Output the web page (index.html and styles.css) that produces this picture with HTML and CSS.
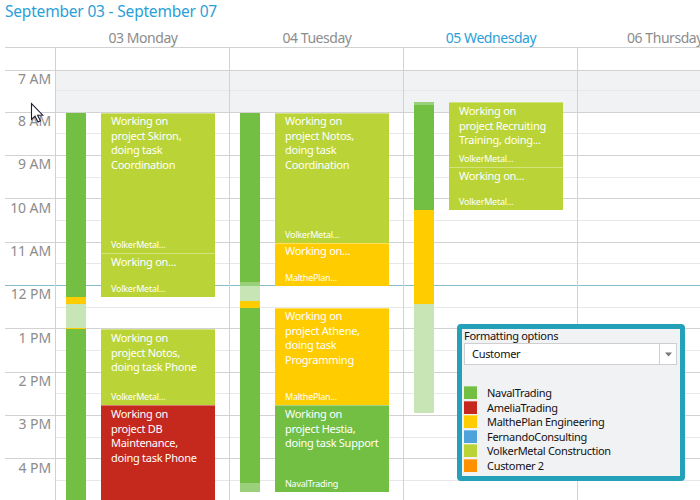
FILE: index.html
```html
<!DOCTYPE html>
<html lang="en">
<head>
<meta charset="utf-8">
<title>Schedule</title>
<link rel="stylesheet" href="styles.css">
</head>
<body>
<h1 class="range">September 03 - September 07</h1>
<header class="days">
  <div class="day-name">03 Monday</div>
  <div class="day-name">04 Tuesday</div>
  <div class="day-name today">05 Wednesday</div>
  <div class="day-name">06 Thursday</div>
</header>
<main class="calendar">
  <div class="rows">
    <div class="all-day"></div>
    <div class="hour h42 off"><span class="label">7 AM</span><div class="slots"><i class="half a20"></i></div></div>
    <div class="hour h43"><span class="label">8 AM</span><div class="slots"><i class="half a21"></i></div></div>
    <div class="hour h43"><span class="label">9 AM</span><div class="slots"><i class="half a22"></i></div></div>
    <div class="hour h44"><span class="label low">10 AM</span><div class="slots"><i class="half a22"></i></div></div>
    <div class="hour h43"><span class="label">11 AM</span><div class="slots"><i class="half a21"></i></div></div>
    <div class="hour h43 noon"><span class="label">12 PM</span><div class="slots"><i class="half a22"></i></div></div>
    <div class="hour h44"><span class="label low">1 PM</span><div class="slots"><i class="half a22"></i></div></div>
    <div class="hour h43"><span class="label">2 PM</span><div class="slots"><i class="half a21"></i></div></div>
    <div class="hour h43"><span class="label">3 PM</span><div class="slots"><i class="half a22"></i></div></div>
    <div class="hour h44"><span class="label low">4 PM</span><div class="slots"><i class="half a22"></i></div></div>
  </div>
  <div class="columns">
    <section class="day monday">
      <div class="status">
        <i class="green m-s1"></i><i class="yellow m-s2"></i><i class="pale m-s3"></i><i class="yellow m-s4"></i><i class="green fill"></i>
      </div>
      <div class="events">
        <article class="event lime m-e1"><p>Working on<br>project Skiron,<br>doing task<br>Coordination</p><small>VolkerMetal...</small></article>
        <article class="event lime low m-e2"><p>Working on...</p><small>VolkerMetal...</small></article>
        <article class="event lime low m-e3"><p>Working on<br>project Notos,<br>doing task Phone</p><small>VolkerMetal...</small></article>
        <article class="event red low fill"><p>Working on<br>project DB<br>Maintenance,<br>doing task Phone</p></article>
      </div>
    </section>
    <section class="day tuesday">
      <div class="status">
        <i class="green t-s1"></i><i class="soft t-s2"></i><i class="pale t-s3"></i><i class="yellow t-s4"></i><i class="green t-s5"></i><i class="soft t-s6"></i>
      </div>
      <div class="events">
        <article class="event lime t-e1"><p>Working on<br>project Notos,<br>doing task<br>Coordination</p><small>VolkerMetal...</small></article>
        <article class="event yellow raised t-e2"><p>Working on...</p><small>MalthePlan...</small></article>
        <article class="event yellow t-e3"><p>Working on<br>project Athene,<br>doing task<br>Programming</p><small>MalthePlan...</small></article>
        <article class="event green low t-e4"><p>Working on<br>project Hestia,<br>doing task Support</p><small>NavalTrading</small></article>
      </div>
    </section>
    <section class="day wednesday">
      <div class="status">
        <i class="soft w-s1"></i><i class="green w-s2"></i><i class="yellow w-s3"></i><i class="pale w-s4"></i>
      </div>
      <div class="events">
        <article class="event lime low w-e1"><p>Working on<br>project Recruiting<br>Training, doing...</p><small>VolkerMetal...</small></article>
        <article class="event lime low w-e2"><p>Working on...</p><small>VolkerMetal...</small></article>
      </div>
    </section>
    <section class="day"></section>
  </div>
</main>
<aside class="panel">
  <div class="panel-title">Formatting options</div>
  <div class="select"><span class="value">Customer</span><span class="arrow"><svg width="7" height="5" viewBox="0 0 7 5"><path d="M0 .5H7L3.5 4.5Z" fill="#777"/></svg></span></div>
  <ul class="legend">
    <li><i class="green"></i>NavalTrading</li>
    <li><i class="red"></i>AmeliaTrading</li>
    <li><i class="yellow"></i>MalthePlan Engineering</li>
    <li><i class="blue"></i>FernandoConsulting</li>
    <li><i class="lime"></i>VolkerMetal Construction</li>
    <li><i class="orange"></i>Customer 2</li>
  </ul>
</aside>
<svg class="pointer" width="14" height="22" viewBox="0 0 14 22"><path d="M1.5 1.5V17.5L5 14.2L8 20L10.4 18.8L7.6 13.2H12.8Z" fill="#fff" stroke="#1c1c30" stroke-width="1.1"/></svg>
</body>
</html>
```
FILE: styles.css
```css
* { box-sizing: border-box; }
body {
  margin: 0;
  width: 700px;
  height: 500px;
  overflow: hidden;
  position: relative;
  background: #fff;
  font-family: "Noto Sans", "Open Sans", sans-serif;
  display: flex;
  flex-direction: column;
}
i { display: block; font-style: normal; }
.range {
  margin: 0;
  padding-left: 5px;
  height: 28px;
  font-size: 15.5px;
  line-height: 23px;
  letter-spacing: -.19px;
  font-weight: 400;
  color: #2a9fd8;
  white-space: nowrap;
}
.days {
  display: flex;
  height: 19px;
  padding-left: 56px;
}
.day-name {
  flex: 0 0 174px;
  text-align: center;
  font-size: 14px;
  line-height: 20px;
  letter-spacing: -.45px;
  color: #8c8c8c;
  white-space: nowrap;
}
.today { color: #2a9fd8; }

.calendar {
  display: grid;
  height: 453px;
  overflow: hidden;
}
.rows, .columns { grid-area: 1 / 1; }
.rows { padding-left: 5px; }
.all-day { height: 23px; border-top: 1px solid #d2d2d2; }
.hour { display: flex; border-top: 1px solid #d2d2d2; }
.noon { border-top-color: #8abccb; }
.label {
  width: 50px;
  padding-right: 4px;
  text-align: right;
  font-size: 14px;
  line-height: 16px;
  letter-spacing: -.1px;
  color: #8c8c8c;
  white-space: nowrap;
}
.label.low { padding-top: 1px; }
.slots { flex: 1; }
.off .slots { background: #f1f2f4; }
.half { border-bottom: 1px solid #e8e8e8; }
.h42 { height: 42px; }
.h43 { height: 43px; }
.h44 { height: 44px; }
.a20 { height: 20px; }
.a21 { height: 21px; }
.a22 { height: 22px; }

.columns { display: flex; padding-left: 55px; height: 453px; }
.day {
  flex: 0 0 174px;
  display: flex;
  gap: 15px;
  border-left: 1px solid #d2d2d2;
  padding: 66px 0 0 10px;
}
.wednesday { padding-top: 55px; }
.status { width: 20px; display: flex; flex-direction: column; }
.events { width: 114px; display: flex; flex-direction: column; }
.fill { flex: 1; }
.event {
  display: flex;
  flex-direction: column;
  justify-content: space-between;
  padding: 0 0 2px 10px;
  border-top: 1px solid rgba(255, 255, 255, .35);
  color: #fff;
  white-space: nowrap;
  overflow: hidden;
}
.event.low { padding-top: 1px; }
.event p { margin: 0; font-size: 11px; line-height: 14.6px; letter-spacing: -.27px; }
.event small { font-size: 9px; line-height: 12px; letter-spacing: -.24px; }

.green { background-color: #72bf44; }
.lime { background-color: #bad437; }
.yellow { background-color: #fc0; }
.red { background-color: #c5281c; }
.blue { background-color: #4fa3dc; }
.orange { background-color: #ff9000; }
.soft { background-color: #9bd07b; }
.pale { background-color: #c8e5b5; }

.m-s1 { height: 184px; }
.m-s2 { height: 7px; }
.m-s3 { height: 24px; }
.m-s4 { height: 1px; }
.m-e1 { height: 140px; }
.m-e2 { height: 44px; margin-bottom: 32px; }
.m-e3 { height: 76px; }
.t-s1 { height: 169px; }
.t-s2 { height: 4px; }
.t-s3 { height: 15px; }
.t-s4 { height: 7px; }
.t-s5 { height: 175px; }
.t-s6 { height: 9px; }
.t-e1 { height: 130px; }
.t-e2 { height: 43px; margin-bottom: 22px; }
.t-e3 { height: 97px; }
.t-e4 { height: 87px; }
.w-s1 { height: 3px; }
.w-s2 { height: 105px; }
.w-s3 { height: 94px; }
.w-s4 { height: 109px; }
.w-e1 { height: 65px; }
.w-e2 { height: 43px; }

.panel {
  position: absolute;
  left: 457px;
  top: 324px;
  width: 228px;
  height: 157px;
  padding: 0 3px 0 2px;
  border: 5px solid #24a0b9;
  border-radius: 4px;
  background: #f1f2f4;
  color: #111;
  font-size: 11px;
  letter-spacing: -.3px;
  white-space: nowrap;
}
.panel-title { height: 14px; line-height: 13px; }
.select {
  display: flex;
  height: 22px;
  border: 1px solid #cfcfd2;
  background: #fff;
}
.value { flex: 1; padding-left: 7px; line-height: 20px; }
.arrow {
  width: 17px;
  border-left: 1px solid #cfcfd2;
  display: flex;
  align-items: center;
  justify-content: center;
}
.legend { list-style: none; margin: 20px 0 0; padding: 0; }
.legend li { display: flex; height: 14.6px; line-height: 15.6px; gap: 10px; }
.legend i { width: 13px; height: 13px; margin-top: 1px; border-top: 1px solid rgba(255, 255, 255, .3); }
.pointer { position: absolute; left: 30px; top: 102px; }
```
